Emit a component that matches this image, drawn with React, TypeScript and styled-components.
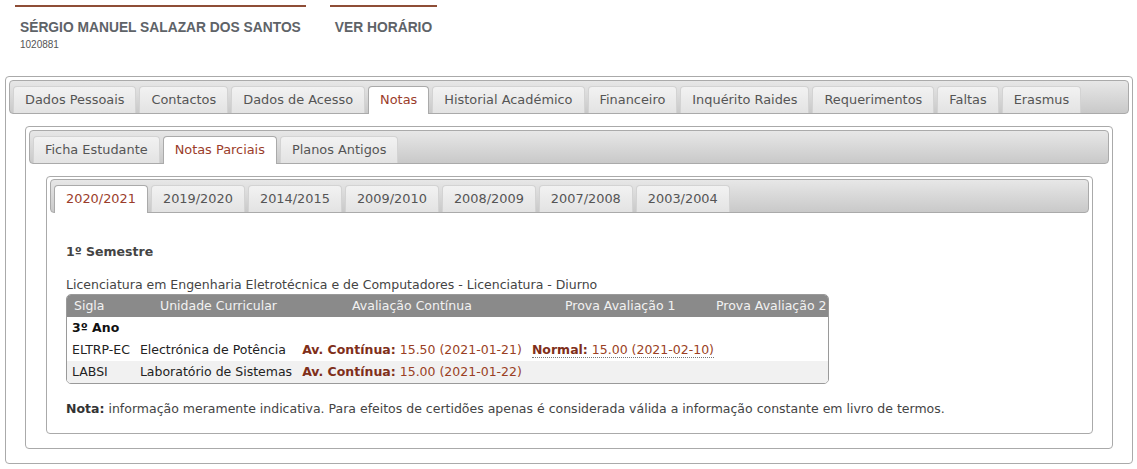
import React from "react";
import styled, { createGlobalStyle } from "styled-components";

const GlobalStyle = createGlobalStyle`
  html, body { margin: 0; padding: 0; background: #fff; }
  body { font-family: "DejaVu Sans", Verdana, sans-serif; color: #333; }
`;

const Page = styled.div`
  padding: 5px 4px 0 5px;
`;

const Header = styled.header`
  display: flex;
  gap: 24px;
  padding-left: 10px;
`;

const HeaderItem = styled.div`
  border-top: 2px solid #8e4d36;
  padding: 12px 5px 0 5px;
`;

const Name = styled.div`
  font: 700 13.8px/18px "Liberation Sans", Arial, sans-serif;
  color: #5e6368;
  text-transform: uppercase;
  white-space: nowrap;
`;

const StudentNumber = styled.div`
  margin-top: 2px;
  font: 10px/12px "Liberation Sans", Arial, sans-serif;
  color: #555;
`;

const MainArea = styled.div`
  margin-top: 25px;
`;

const TabsPanel = styled.div<{ $padTop?: number }>`
  border: 1px solid #aaa;
  border-radius: 4px;
  padding: ${(p) => p.$padTop ?? 3}px 3px 0;
  background: #fff;
`;

const TabBar = styled.ul`
  display: flex;
  align-items: flex-end;
  gap: 3px;
  height: 34px;
  box-sizing: border-box;
  margin: 0;
  padding: 5px 3px 0;
  list-style: none;
  border: 1px solid #aaa;
  border-radius: 4px;
  background: linear-gradient(#e7e7e7, #c9c9c9);
`;

const Tab = styled.li<{ $active?: boolean }>`
  box-sizing: border-box;
  height: ${(p) => (p.$active ? 28 : 27)}px;
  margin-bottom: ${(p) => (p.$active ? -1 : 0)}px;
  padding: 0 11px;
  line-height: 26px;
  font-size: 12.9px;
  white-space: nowrap;
  border: 1px solid ${(p) => (p.$active ? "#aaa" : "#d3d3d3")};
  border-bottom: 0;
  border-radius: 4px 4px 0 0;
  background: ${(p) => (p.$active ? "#fff" : "linear-gradient(#f2f2f2, #e3e3e3)")};
  color: ${(p) => (p.$active ? "#9b3d2b" : "#555")};
  cursor: pointer;
`;

const TabContent = styled.div<{ $pad: string }>`
  padding: ${(p) => p.$pad};
`;

const SemesterTitle = styled.div`
  margin-top: 31px;
  font: 700 12.5px/16px "DejaVu Sans", Verdana, sans-serif;
  color: #444;
`;

const CourseLine = styled.div`
  margin-top: 17px;
  font-size: 12.5px;
  line-height: 16px;
  color: #444;
`;

const GradesBox = styled.div`
  margin-top: 1px;
  width: 763px;
  box-sizing: border-box;
  border: 1px solid #9a9a9a;
  border-radius: 5px;
  overflow: hidden;
  font-size: 12.5px;
`;

const GradesHead = styled.div`
  display: flex;
  height: 22px;
  background: #8a8a8a;
  color: #f2f2f2;
  line-height: 22px;
  white-space: nowrap;
  overflow: hidden;
`;

const HeadCell = styled.div<{ $w?: number }>`
  flex: ${(p) => (p.$w ? `0 0 ${p.$w}px` : "1 0 auto")};
  box-sizing: border-box;
  padding-left: 7px;
`;

const GradesTable = styled.table`
  width: 100%;
  border-collapse: collapse;
  color: #222;
`;

const Row = styled.tr<{ $shade?: boolean }>`
  height: 22px;
  background: ${(p) => (p.$shade ? "#f1f1f1" : "#fff")};
`;

const Cell = styled.td<{ $fill?: boolean }>`
  padding: 0 5px;
  line-height: 16px;
  white-space: nowrap;
  vertical-align: middle;
  width: ${(p) => (p.$fill ? "100%" : "auto")};
`;

const YearCell = styled.td`
  padding: 0 5px;
  font-weight: 700;
  color: #111;
  line-height: 16px;
`;

const Grade = styled.span`
  color: #9a3f24;
`;

const GradeLabel = styled.b`
  color: #7f2f1a;
`;

const Exam = styled.abbr`
  text-decoration: none;
  border-bottom: 1px dotted #777;
  cursor: help;
`;

const Note = styled.p`
  margin: 17px 0 0;
  font-size: 12.5px;
  line-height: 16px;
  color: #444;
  b { color: #333; }
`;

const mainTabs = [
  "Dados Pessoais",
  "Contactos",
  "Dados de Acesso",
  "Notas",
  "Historial Académico",
  "Financeiro",
  "Inquérito Raides",
  "Requerimentos",
  "Faltas",
  "Erasmus",
];
const subTabs = ["Ficha Estudante", "Notas Parciais", "Planos Antigos"];
const years = ["2020/2021", "2019/2020", "2014/2015", "2009/2010", "2008/2009", "2007/2008", "2003/2004"];

const heads: { label: string; w?: number }[] = [
  { label: "Sigla", w: 86 },
  { label: "Unidade Curricular", w: 192 },
  { label: "Avaliação Contínua", w: 213 },
  { label: "Prova Avaliação 1", w: 151 },
  { label: "Prova Avaliação 2" },
];

function Tabs({ items, active }: { items: string[]; active: string }) {
  return (
    <TabBar>
      {items.map((t) => (
        <Tab key={t} $active={t === active}>
          {t}
        </Tab>
      ))}
    </TabBar>
  );
}

export default function App() {
  return (
    <>
      <GlobalStyle />
      <Page>
        <Header>
          <HeaderItem>
            <Name>Sérgio Manuel Salazar dos Santos</Name>
            <StudentNumber>1020881</StudentNumber>
          </HeaderItem>
          <HeaderItem>
            <Name>Ver Horário</Name>
          </HeaderItem>
        </Header>
        <MainArea>
          <TabsPanel>
            <Tabs items={mainTabs} active="Notas" />
            <TabContent $pad="12px 16px 14px 16px">
              <TabsPanel>
                <Tabs items={subTabs} active="Notas Parciais" />
                <TabContent $pad="12px 16px 14px 17px">
                  <TabsPanel $padTop={2}>
                    <Tabs items={years} active="2020/2021" />
                    <TabContent $pad="0 16px 16px 16px">
                      <SemesterTitle>1º Semestre</SemesterTitle>
                      <CourseLine>
                        Licenciatura em Engenharia Eletrotécnica e de Computadores - Licenciatura - Diurno
                      </CourseLine>
                      <GradesBox>
                        <GradesHead>
                          {heads.map((h) => (
                            <HeadCell key={h.label} $w={h.w}>
                              {h.label}
                            </HeadCell>
                          ))}
                        </GradesHead>
                        <GradesTable>
                          <tbody>
                            <Row>
                              <YearCell colSpan={5}>3º Ano</YearCell>
                            </Row>
                            <Row>
                              <Cell>ELTRP-EC</Cell>
                              <Cell>Electrónica de Potência</Cell>
                              <Cell>
                                <Grade>
                                  <GradeLabel>Av. Contínua:</GradeLabel> 15.50 (2021-01-21)
                                </Grade>
                              </Cell>
                              <Cell>
                                <Grade>
                                  <Exam title="Época Normal">
                                    <GradeLabel>Normal:</GradeLabel> 15.00 (2021-02-10)
                                  </Exam>
                                </Grade>
                              </Cell>
                              <Cell $fill />
                            </Row>
                            <Row $shade>
                              <Cell>LABSI</Cell>
                              <Cell>Laboratório de Sistemas</Cell>
                              <Cell>
                                <Grade>
                                  <GradeLabel>Av. Contínua:</GradeLabel> 15.00 (2021-01-22)
                                </Grade>
                              </Cell>
                              <Cell />
                              <Cell $fill />
                            </Row>
                          </tbody>
                        </GradesTable>
                      </GradesBox>
                      <Note>
                        <b>Nota:</b> informação meramente indicativa. Para efeitos de certidões apenas é
                        considerada válida a informação constante em livro de termos.
                      </Note>
                    </TabContent>
                  </TabsPanel>
                </TabContent>
              </TabsPanel>
            </TabContent>
          </TabsPanel>
        </MainArea>
      </Page>
    </>
  );
}
